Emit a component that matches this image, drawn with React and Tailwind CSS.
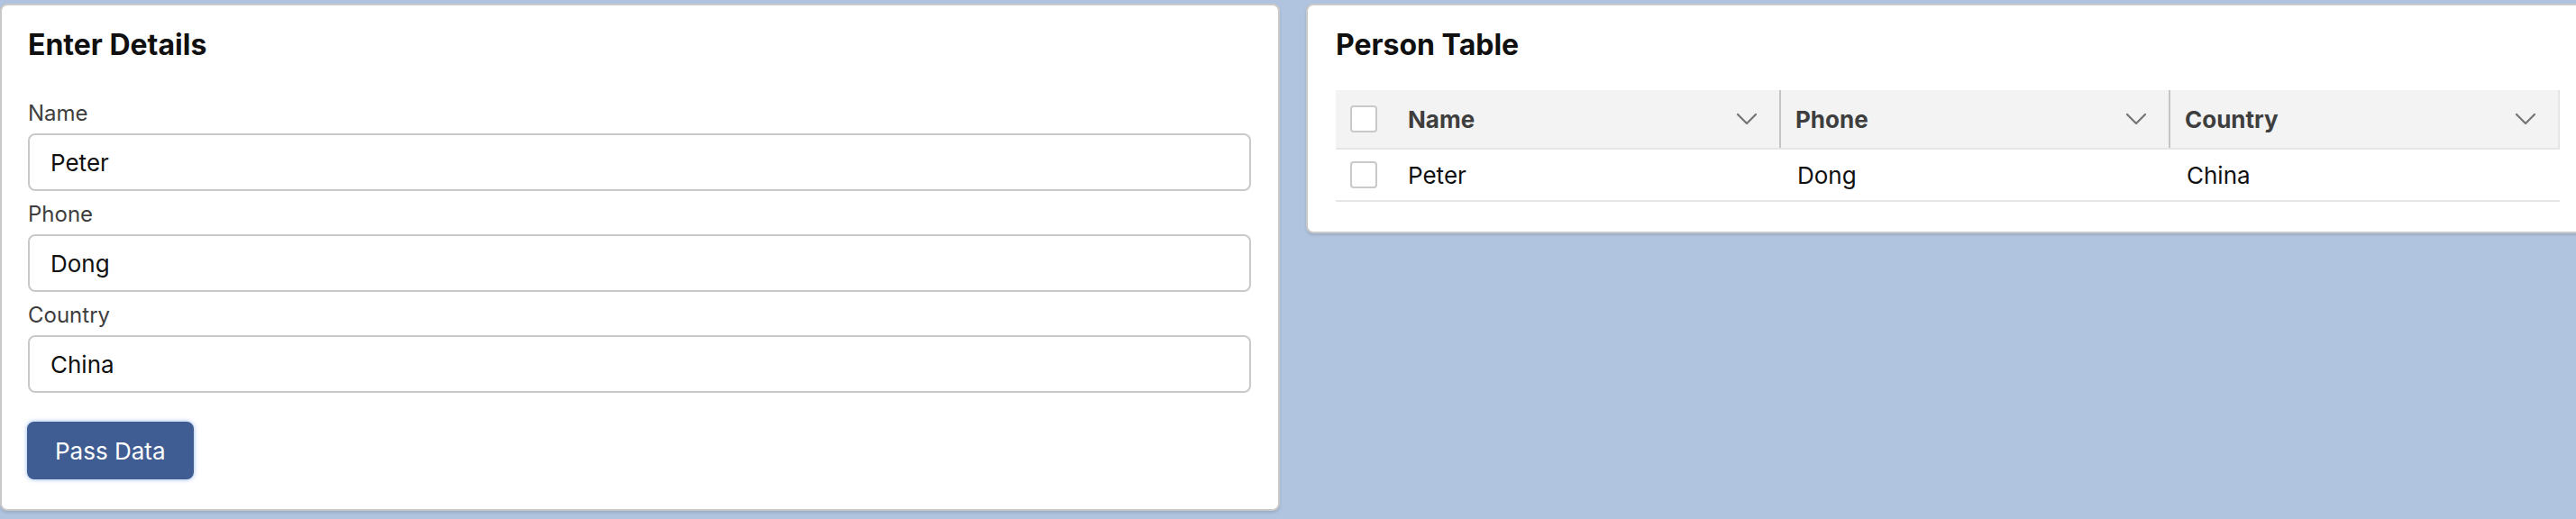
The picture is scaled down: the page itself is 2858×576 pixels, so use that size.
import React from "react";

function Chevron() {
  return (
    <svg width="24" height="14" viewBox="0 0 24 14" fill="none" className="shrink-0">
      <path d="M2 2 L12 12 L22 2" stroke="#747474" strokeWidth="2.2" strokeLinecap="round" strokeLinejoin="round" />
    </svg>
  );
}

function Checkbox() {
  return <div className="w-[30px] h-[30px] rounded-[4px] border-2 border-[#c9c9c9] bg-white" />;
}

function Field({ label, value }) {
  return (
    <div className="flex flex-col">
      <div className="pt-[8px] mb-[4px] text-[24px] leading-[36px] text-[#3e3e3e]">{label}</div>
      <div className="h-[64px] rounded-[8px] border-2 border-[#c9c9c9] bg-white flex items-center pl-[23px] text-[26px] text-[#101010]">
        {value}
      </div>
    </div>
  );
}

function HeaderCell({ label, width, divider = true }) {
  return (
    <div
      className={
        "h-[64px] flex items-center justify-between pl-[16px] pr-[24px] border-r-2 " +
        (divider ? "border-[#c4c4c4]" : "border-[#e5e5e5]")
      }
      style={{ width }}
    >
      <span className="text-[26px] font-bold text-[#3e3e3e]">{label}</span>
      <Chevron />
    </div>
  );
}

export default function App() {
  return (
    <div className="w-[2858px] h-[576px] overflow-hidden bg-[#b0c4df] font-['Inter',sans-serif]">
      <div className="flex items-start gap-[29px] pt-[4px]">
        {/* Left card */}
        <div className="w-[1420px] shrink-0 bg-white rounded-[8px] border-2 border-[#c9c9c9] shadow-[0_2px_3px_rgba(0,0,0,0.12)] pt-[24px] pb-[33px] pl-[29px] pr-[30px]">
          <div className="text-[32px] leading-[40px] font-bold text-[#101010]">Enter Details</div>
          <div className="mt-[30px] flex flex-col">
            <Field label="Name" value="Peter" />
            <Field label="Phone" value="Dong" />
            <Field label="Country" value="China" />
          </div>
          <div className="mt-[32px] flex">
            <button className="h-[64px] px-[29px] -ml-[1px] rounded-[8px] border-2 border-[#3f5d92] bg-[#3f5d92] text-white text-[26px] shadow-[0_0_5px_rgba(70,130,220,0.6)]">
              Pass Data
            </button>
          </div>
        </div>

        {/* Right card */}
        <div className="shrink-0 bg-white rounded-[8px] border-2 border-[#c9c9c9] shadow-[0_2px_3px_rgba(0,0,0,0.12)] pt-[24px] pb-[33px] pl-[31px] pr-[30px]">
          <div className="text-[32px] leading-[40px] font-bold text-[#101010]">Person Table</div>
          <div className="mt-[30px] w-[1358px]">
            <div className="flex bg-[#f3f3f3] border-b-2 border-[#e5e5e5]">
              <div className="w-[64px] h-[64px] flex items-center pl-[16px]">
                <Checkbox />
              </div>
              <HeaderCell label="Name" width={430} />
              <HeaderCell label="Phone" width={432} />
              <HeaderCell label="Country" width={432} divider={false} />
            </div>
            <div className="flex border-b-2 border-[#e5e5e5] text-[26px] text-[#101010]">
              <div className="w-[64px] h-[56px] flex items-center pl-[16px]">
                <Checkbox />
              </div>
              <div className="w-[430px] h-[56px] flex items-center pl-[16px]">Peter</div>
              <div className="w-[432px] h-[56px] flex items-center pl-[18px]">Dong</div>
              <div className="w-[432px] h-[56px] flex items-center pl-[18px]">China</div>
            </div>
          </div>
        </div>
      </div>
    </div>
  );
}
